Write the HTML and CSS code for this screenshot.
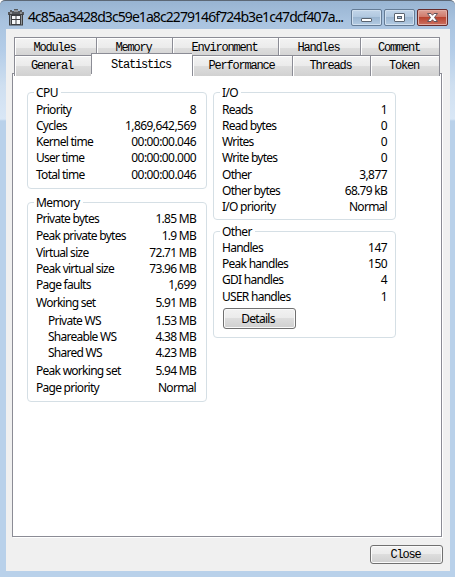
FILE: index.html
```
<!DOCTYPE html>
<html lang="en">
<head>
<meta charset="utf-8">
<title>Process properties</title>
<link rel="stylesheet" href="styles.css">
</head>
<body>
<div class="window">
  <header class="titlebar">
    <svg class="app-icon" width="16" height="17" viewBox="0 0 16 17">
      <path d="M0 3h2V1h2v1h2V0h4v2h2V1h2v2h2v3H0z" fill="#55585c"/>
      <path d="M1 5h14v11.500H1z" fill="#3d3f42"/>
      <path d="M2.500 6v9.500M13.500 6v9.500" stroke="#92979b"/>
      <path d="M4 7h3.500v3H4zM8.500 7H12v3H8.500zM4 11h3.500v4H4zM8.500 11H12v4H8.500z" fill="#f5f7f9"/>
      <path d="M2 4h2M6 2h4M12 4h2" stroke="#c9cdd0"/>
    </svg>
    <h1 class="title">4c85aa3428d3c59e1a8c2279146f724b3e1c47dcf407a...</h1>
    <div class="controls">
      <button class="control"><svg width="29" height="15" viewBox="0 0 29 15"><rect x="9.500" y="8.500" width="10" height="3" rx=".5" fill="#fff" stroke="#5a6470"/></svg></button>
      <button class="control"><svg width="29" height="15" viewBox="0 0 29 15"><rect x="9.500" y="3.500" width="10" height="8" rx=".5" fill="#fff" stroke="#5a6470"/><rect x="12.500" y="6.500" width="4" height="2" fill="#a9c0da" stroke="#5a6470"/></svg></button>
      <button class="control control-close"><svg width="29" height="15" viewBox="0 0 29 15"><path d="M9.500 3.500h3.500l1.500 1.800 1.500-1.800h3.500l-3 4 3 4H16l-1.500-1.800-1.500 1.800H9.500l3-4z" fill="#fff" stroke="#64545b"/></svg></button>
    </div>
  </header>
  <main class="client">
    <nav class="tabs">
      <div class="tab-row tab-row-back">
        <span class="tab">Modules</span><span class="tab">Memory</span><span class="tab">Environment</span><span class="tab">Handles</span><span class="tab">Comment</span>
      </div>
      <div class="tab-row tab-row-front">
        <span class="tab">General</span><span class="tab tab-active">Statistics</span><span class="tab">Performance</span><span class="tab">Threads</span><span class="tab">Token</span>
      </div>
    </nav>
    <section class="page">
      <div class="column">
        <section class="group group-cpu">
          <h2>CPU</h2>
          <div class="row"><span>Priority</span><span class="num">8</span></div>
          <div class="row"><span>Cycles</span><span class="num">1,869,642,569</span></div>
          <div class="row"><span>Kernel time</span><span class="num">00:00:00.046</span></div>
          <div class="row"><span>User time</span><span class="num">00:00:00.000</span></div>
          <div class="row gap-1"><span>Total time</span><span class="num">00:00:00.046</span></div>
        </section>
        <section class="group group-memory">
          <h2>Memory</h2>
          <div class="row"><span>Private bytes</span><span>1.85 MB</span></div>
          <div class="row gap-1"><span>Peak private bytes</span><span>1.9 MB</span></div>
          <div class="row gap-1"><span>Virtual size</span><span>72.71 MB</span></div>
          <div class="row"><span>Peak virtual size</span><span>73.96 MB</span></div>
          <div class="row"><span>Page faults</span><span class="num">1,699</span></div>
          <div class="row gap-2"><span>Working set</span><span>5.91 MB</span></div>
          <div class="row gap-2 nested"><span>Private WS</span><span>1.53 MB</span></div>
          <div class="row nested"><span>Shareable WS</span><span>4.38 MB</span></div>
          <div class="row nested"><span>Shared WS</span><span>4.23 MB</span></div>
          <div class="row gap-2"><span>Peak working set</span><span>5.94 MB</span></div>
          <div class="row gap-1"><span>Page priority</span><span>Normal</span></div>
        </section>
      </div>
      <div class="column">
        <section class="group group-io">
          <h2>I/O</h2>
          <div class="row"><span>Reads</span><span class="num">1</span></div>
          <div class="row"><span>Read bytes</span><span class="num">0</span></div>
          <div class="row"><span>Writes</span><span class="num">0</span></div>
          <div class="row"><span>Write bytes</span><span class="num">0</span></div>
          <div class="row gap-1"><span>Other</span><span class="num">3,877</span></div>
          <div class="row"><span>Other bytes</span><span>68.79 kB</span></div>
          <div class="row"><span>I/O priority</span><span>Normal</span></div>
        </section>
        <section class="group group-other">
          <h2>Other</h2>
          <div class="row"><span>Handles</span><span class="num">147</span></div>
          <div class="row"><span>Peak handles</span><span class="num">150</span></div>
          <div class="row"><span>GDI handles</span><span class="num">4</span></div>
          <div class="row gap-1"><span>USER handles</span><span class="num">1</span></div>
          <button class="button button-details">Details</button>
        </section>
      </div>
    </section>
    <footer class="actions"><button class="button button-close">Close</button></footer>
  </main>
</div>
</body>
</html>
```
FILE: styles.css
```
* { box-sizing: border-box; }
body { margin: 0; }
h1, h2 { margin: 0; font-weight: normal; }
button { margin: 0; padding: 0; }

.window {
  width: 455px;
  height: 577px;
  padding: 0 5px 6px 6px;
  overflow: hidden;
  border-top: 1px solid #5c6876;
  border-radius: 5px 5px 0 0;
  background: linear-gradient(#98b4d2 0, #a9c3df 20px, #b4cde8 50px, #cfdff0 85px, #d9e7f6 118px, #b9d1ea 120px, #b9d1ea 100%);
}
.titlebar {
  display: flex;
  height: 28px;
  padding: 0 2px 0 2px;
}
.app-icon { margin-top: 8px; flex: none; }
.title {
  flex: 1;
  min-width: 0;
  margin-left: 4px;
  white-space: nowrap;
  font: 14px/32px "Noto Sans", "Open Sans", sans-serif;
  letter-spacing: -0.93px;
  color: #000;
}
.controls { display: flex; flex: none; gap: 2px; padding-top: 8px; }
.control {
  width: 31px;
  height: 17px;
  border: 1px solid #647b95;
  border-radius: 2px;
  background: linear-gradient(#c2d5e9 0, #b0c7df 48%, #9bb6d1 50%, #b3cbe3 100%);
  box-shadow: inset 0 0 0 1px #d1e0ef;
}
.control svg { display: block; }
.control-close {
  border-color: #672c2c;
  background: linear-gradient(#dda297 0, #cf7768 48%, #b9432f 50%, #cc7161 100%);
  box-shadow: inset 0 0 0 1px #e3aea5;
}

.client {
  height: 542px;
  padding: 8px 7px 0 6px;
  background: #f0f0f0;
}
.tabs {
  padding-left: 2px;
  font: 12px/18px "Liberation Mono", monospace;
  letter-spacing: -1.2px;
}
.tab-row { display: grid; height: 18px; justify-content: start; }
.tab-row-back { grid-template-columns: 82px 76px 106px 82px 80px; }
.tab-row-front { grid-template-columns: 77px 101px 100px 78px 70px; }
.tab {
  border: solid #8b8c95;
  border-width: 1px 0 0 1px;
  box-shadow: inset 1px 1px #fff;
  background: linear-gradient(#f3f3f3 0, #ebebeb 48%, #dddddd 50%, #d1d1d1 100%);
  padding-right: 2px;
  text-align: center;
  color: #000;
  line-height: 20px;
}
.tab:last-child { border-right-width: 1px; }
.tab-active {
  height: 21px;
  margin-top: -2px;
  border-color: #8b8c95;
  background: #fff;
  position: relative;
  line-height: 22px;
}

.page {
  display: flex;
  gap: 6px;
  width: 430px;
  height: 464px;
  padding: 18px 0 0 14px;
  border: 1px solid #8b8c95;
  background: #fff;
  box-shadow: 1px 1px #fff;
}
.column { display: flex; flex-direction: column; }
.group {
  padding: 0 8px;
  border: 1px solid #d5dfe5;
  border-radius: 4px;
  font: 12px/16px "Noto Sans", "Open Sans", sans-serif;
  letter-spacing: -0.73px;
  color: #000;
}
.group h2 {
  width: fit-content;
  height: 16px;
  margin: -8px 0 0 -2px;
  padding: 0 3px 0 2px;
  background: #fff;
  font-size: 12px;
  letter-spacing: -0.6px;
}
.group-cpu { width: 180px; height: 97px; }
.group-memory { width: 180px; height: 200px; margin-top: 13px; }
.group-io { width: 183px; height: 128px; }
.group-other { width: 183px; height: 107px; margin-top: 11px; }
.group-cpu h2, .group-io h2 { margin-bottom: 1px; }
.row {
  display: flex;
  justify-content: space-between;
  height: 16px;
  padding-right: 2px;
  white-space: nowrap;
}
.group-io .row, .group-other .row { padding-right: 0; }
.num { letter-spacing: -0.56px; }
.gap-1 { margin-top: 1px; }
.gap-2 { margin-top: 2px; }
.nested { padding-left: 12px; }

.button {
  border: 1px solid #707070;
  border-radius: 3px;
  background: linear-gradient(#f2f2f2 0, #ebebeb 48%, #dddddd 50%, #cfcfcf 100%);
  box-shadow: inset 0 0 0 1px #fafafa;
  color: #000;
}
.button-details {
  display: block;
  width: 73px;
  height: 21px;
  margin: 3px 0 0 1px;
  padding: 1px 3px 0 0;
  font: 12px/18px "Noto Sans", "Open Sans", sans-serif;
  letter-spacing: -0.73px;
}
.actions { display: flex; justify-content: flex-end; padding-top: 8px; }
.button-close {
  width: 73px;
  height: 19px;
  padding: 1px 2px 0 0;
  font: 12px/16px "Liberation Mono", monospace;
  letter-spacing: -1.2px;
}
```
